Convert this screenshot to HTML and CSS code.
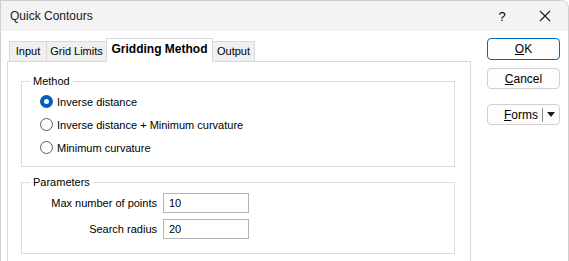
FILE: index.html
```html
<!DOCTYPE html>
<html>
<head>
    <title>Quick Contours</title>
    <link rel="stylesheet" href="styles.css">
</head>
<body>
    <div class="window">
        <div class="titlebar">
            <span class="title">Quick Contours</span>
            <span class="help">?</span>
            <span class="close">
                <svg width="12" height="12" viewBox="0 0 12 12"><path d="M1 1 L11 11 M11 1 L1 11" stroke="#1a1a1a" stroke-width="1.1" fill="none"/></svg>
            </span>
        </div>
        <div class="content">
            <div class="left">
                <div class="tabs">
                    <div class="tab t-input">Input</div>
                    <div class="tab t-limits">Grid Limits</div>
                    <div class="tab t-method active">Gridding Method</div>
                    <div class="tab t-output">Output</div>
                </div>
                <div class="panel">
                    <fieldset class="group method">
                        <legend>Method</legend>
                        <label class="radio"><span class="dot checked"></span>Inverse distance</label>
                        <label class="radio"><span class="dot"></span>Inverse distance + Minimum curvature</label>
                        <label class="radio"><span class="dot"></span>Minimum curvature</label>
                    </fieldset>
                    <fieldset class="group params">
                        <legend>Parameters</legend>
                        <div class="row">
                            <span class="lbl">Max number of points</span>
                            <input type="text" class="field" value="10">
                        </div>
                        <div class="row">
                            <span class="lbl">Search radius</span>
                            <input type="text" class="field" value="20">
                        </div>
                    </fieldset>
                </div>
            </div>
            <div class="buttons">
                <button type="button" class="btn default"><u>O</u>K</button>
                <button type="button" class="btn"><u>C</u>ancel</button>
                <button type="button" class="btn split">
                    <span class="split-text"><u>F</u>orms</span>
                    <span class="split-arrow">
                        <svg width="8" height="5" viewBox="0 0 8 5"><path d="M0 0 L8 0 L4 5 Z" fill="#1a1a1a"/></svg>
                    </span>
                </button>
            </div>
        </div>
    </div>
</body>
</html>
```

FILE: styles.css
```css
body {
    margin: 0;
    font-family: "Liberation Sans", Arial, sans-serif;
    font-size: 11px;
    color: #000;
    background: #fff;
}
.window {
    width: 569px;
    height: 261px;
    box-sizing: border-box;
    border: 1px solid #cfcfcf;
    border-bottom: none;
    border-radius: 0 8px 0 0;
    overflow: hidden;
    background: #fff;
}
.titlebar {
    height: 30px;
    background: #f3f3f3;
    display: flex;
    align-items: center;
    padding-left: 9px;
}
.title {
    flex: 1;
    font-size: 12px;
    color: #1a1a1a;
}
.help {
    width: 18px;
    margin-right: 28px;
    font-size: 13px;
    text-align: center;
}
.close {
    width: 12px;
    height: 12px;
    margin-right: 17px;
    display: flex;
}
.content {
    display: flex;
    padding-top: 7px;
}
.left {
    margin-left: 6px;
    width: 464px;
}
.tabs {
    display: flex;
    align-items: flex-end;
    height: 23px;
    padding-left: 2px;
}
.tab {
    height: 20px;
    line-height: 19px;
    box-sizing: border-box;
    text-align: center;
    border: 1px solid #d9d9d9;
    border-bottom: none;
    border-right: none;
    background: #f0f0f0;
}
.t-input { width: 37px; }
.t-limits { width: 60px; }
.t-method { width: 107px; }
.t-output { width: 42px; }
.tab:last-child {
    border-right: 1px solid #d9d9d9;
}
.tab.active {
    height: 24px;
    line-height: 21px;
    margin-bottom: -1px;
    background: #fff;
    font-weight: bold;
    font-size: 12px;
    border-right: 1px solid #d9d9d9;
    position: relative;
    z-index: 1;
}
.tab.active + .tab {
    border-left: none;
}
.panel {
    border: 1px solid #d9d9d9;
    border-bottom: none;
    height: 200px;
    padding: 13px 15px 0 13px;
}
.group {
    margin: 0;
    border: 1px solid #dcdcdc;
    padding: 0 8px;
}
.group legend {
    padding: 0 3px;
    color: #000;
}
.method {
    height: 87px;
    padding-top: 3px;
}
.radio {
    display: flex;
    align-items: center;
    height: 23px;
    padding-left: 10px;
}
.dot {
    width: 11px;
    height: 11px;
    border: 1px solid #5a5a5a;
    border-radius: 50%;
    margin-right: 4px;
    background: #fff;
    box-sizing: content-box;
}
.dot.checked {
    width: 5px;
    height: 5px;
    border: 4px solid #005fb8;
}
.params {
    margin-top: 9px;
    height: 74px;
    padding-top: 2px;
}
.row {
    display: flex;
    align-items: center;
    height: 26px;
}
.lbl {
    width: 127px;
    text-align: right;
    margin-right: 6px;
}
.field {
    width: 86px;
    height: 20px;
    box-sizing: border-box;
    border: 1px solid #b4b4b4;
    padding: 0 5px;
    font-family: inherit;
    font-size: 11px;
    outline: none;
}
.buttons {
    display: flex;
    flex-direction: column;
    margin-left: 16px;
    width: 73px;
}
.btn {
    height: 21px;
    margin-bottom: 8px;
    border: 1px solid #d0d0d0;
    border-radius: 4px;
    background: #fdfdfd;
    font-family: inherit;
    font-size: 12px;
    padding: 0;
    color: #000;
}
.btn.default {
    border-color: #0067c0;
    height: 22px;
}
.split {
    margin-top: 7px;
    display: flex;
    align-items: center;
    justify-content: flex-end;
}
.split-text {
    padding-right: 4px;
    border-right: 1px solid #8a8a8a;
    line-height: 14px;
}
.split-arrow {
    width: 16px;
    display: flex;
    justify-content: center;
}
```
